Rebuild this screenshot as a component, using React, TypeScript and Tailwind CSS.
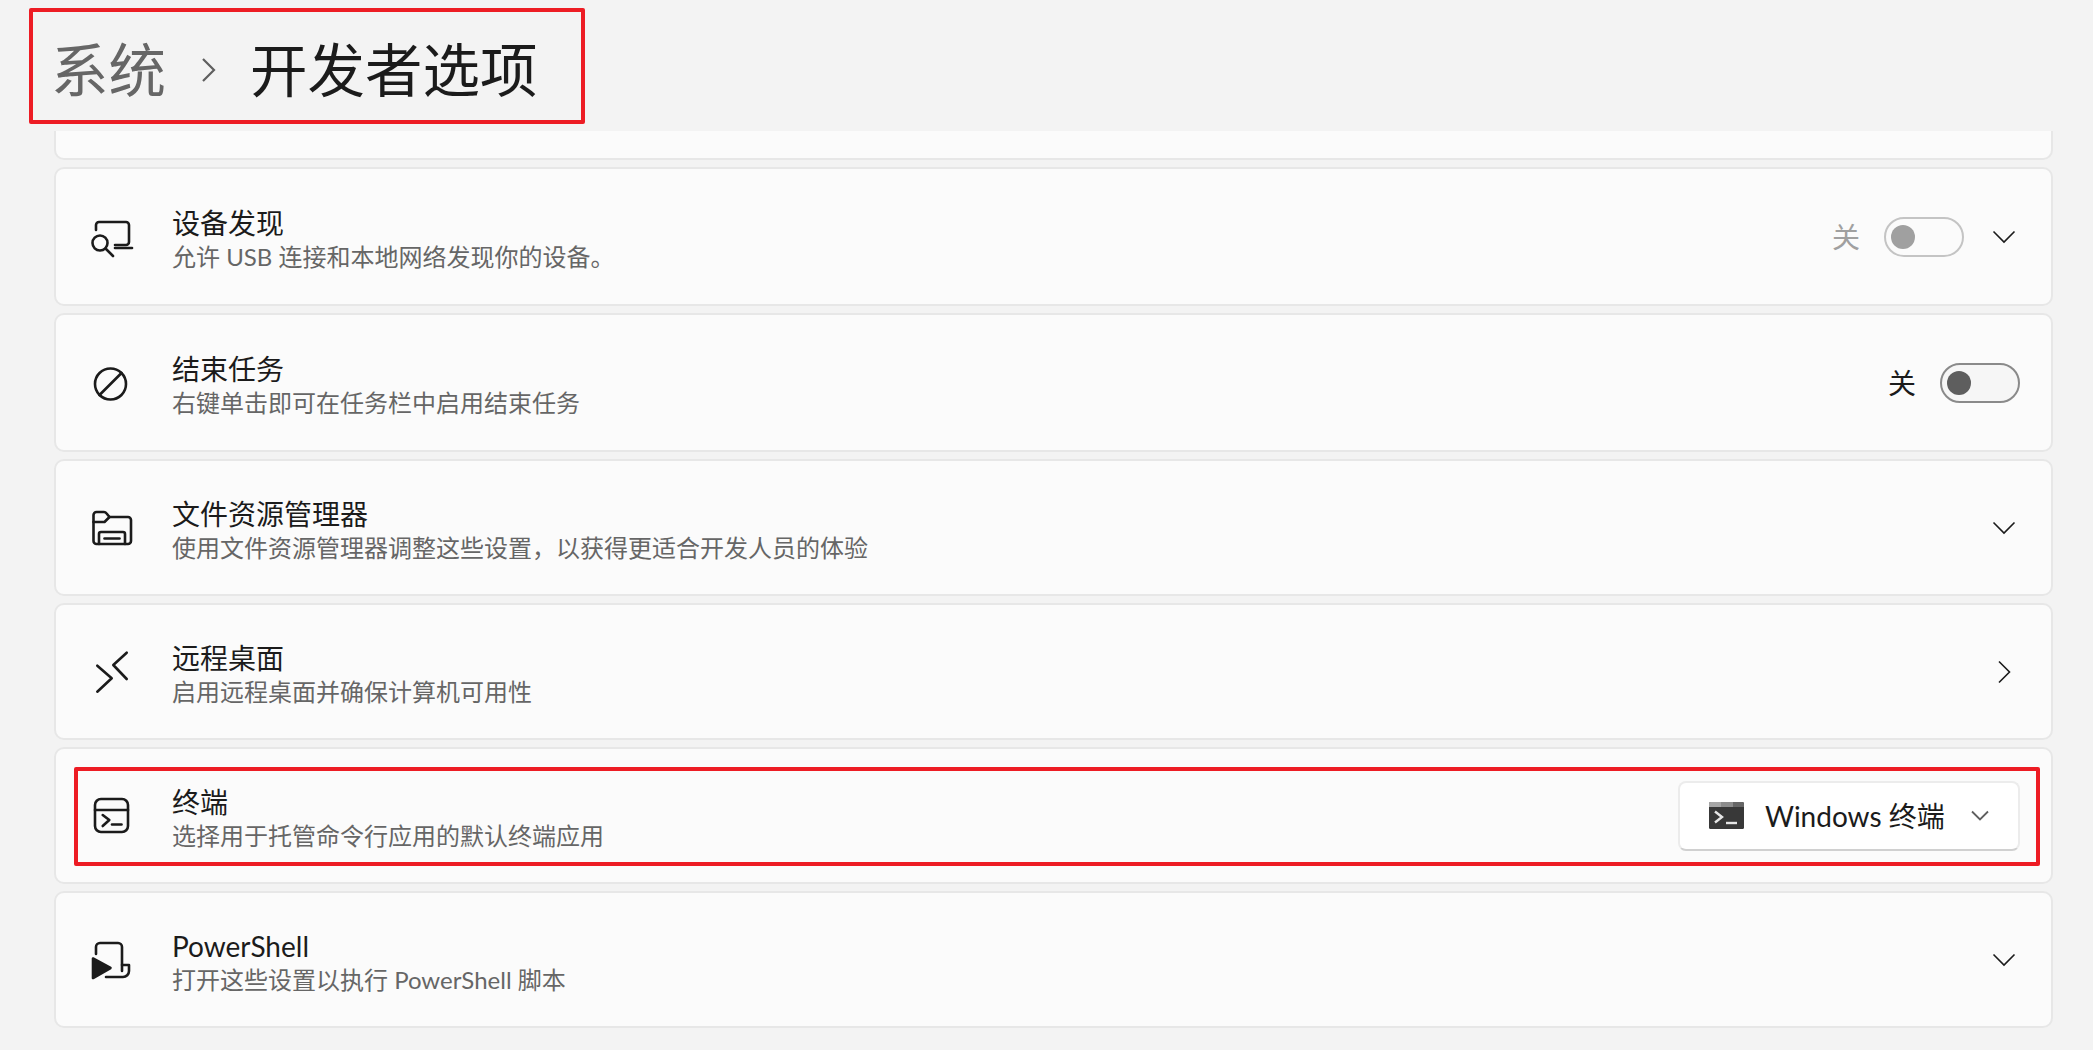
import React from 'react';

const FONT = "font-['Lato','Noto_Sans_CJK_SC',sans-serif]";

const ChevronDown = () => (
    <svg width="24" height="14" viewBox="0 0 24 14" fill="none" stroke="#1b1b1b" strokeWidth="1.6">
        <path d="M1.5 1.5 L12 12 L22.5 1.5" />
    </svg>
);

const ChevronRight = () => (
    <svg width="14" height="24" viewBox="0 0 14 24" fill="none" stroke="#1b1b1b" strokeWidth="1.6">
        <path d="M2 1.5 L12.5 12 L2 22.5" />
    </svg>
);

const IconBox: React.FC<{ children: React.ReactNode }> = ({ children }) => (
    <svg width="44" height="44" viewBox="0 0 44 44" fill="none" stroke="#1b1b1b" strokeWidth="2.6" strokeLinecap="round" strokeLinejoin="round" className="shrink-0">
        {children}
    </svg>
);

const DeviceIcon = () => (
    <IconBox>
        <path d="M6 15 V10 a3 3 0 0 1 3-3 H36 a3 3 0 0 1 3 3 V27 a3 3 0 0 1-3 3 H25" />
        <path d="M25 33 H42" />
        <circle cx="10" cy="28" r="7.5" />
        <path d="M15.5 33.5 L23 41" />
    </IconBox>
);

const BlockIcon = () => (
    <IconBox>
        <circle cx="20.5" cy="23" r="15.5" />
        <path d="M9.5 34 L31.5 12" />
    </IconBox>
);

const FolderIcon = () => (
    <IconBox>
        <path d="M3.5 13 V9 a3 3 0 0 1 3-3 H14 a3 3 0 0 1 2.4 1.2 L19.5 11 H38 a3 3 0 0 1 3 3 V35 a3 3 0 0 1-3 3 H6.5 a3 3 0 0 1-3-3 Z" />
        <path d="M3.5 16 H14.5 L19.5 11" />
        <path d="M9 38 V28 a2 2 0 0 1 2-2 H33 a2 2 0 0 1 2 2 V38" />
        <path d="M14.5 32.5 H29.5" />
    </IconBox>
);

const RemoteIcon = () => (
    <IconBox>
        <path d="M7.3 15.7 L21.7 28.3 L7.3 41.7" />
        <path d="M36.7 2.7 L23.3 15 L36.7 29" />
    </IconBox>
);

const TerminalIcon = () => (
    <IconBox>
        <rect x="5" y="5" width="33" height="33" rx="6" />
        <path d="M5 16 H38" />
        <path d="M12.7 21 L19.3 26 L12.7 32" />
        <path d="M22 30.5 H31.5" />
    </IconBox>
);

const PowerShellIcon = () => (
    <IconBox>
        <path d="M6 16 V9 a4 4 0 0 1 4-4 H28 a4 4 0 0 1 4 4 V33" />
        <path d="M32 27 H39 V33 a6 6 0 0 1-6 6 H16" />
        <path d="M3 20.5 L20.5 30 L3 40 Z" fill="#1b1b1b" />
    </IconBox>
);

const Toggle: React.FC<{ disabled?: boolean }> = ({ disabled }) => (
    <div className={disabled
        ? 'w-[80px] h-[40px] rounded-full border-[2px] border-[#c4c4c4] flex items-center pl-[5px] ml-[24px]'
        : 'w-[80px] h-[40px] rounded-full border-[2px] border-[#8a8a8a] bg-[#f6f6f6] flex items-center pl-[5px] ml-[24px]'}>
        <div className={disabled ? 'w-[24px] h-[24px] rounded-full bg-[#a0a0a0]' : 'w-[24px] h-[24px] rounded-full bg-[#5e5e5e]'} />
    </div>
);

const WindowsTerminalLogo = () => (
    <svg width="35" height="27" viewBox="0 0 35 27" className="shrink-0">
        <rect width="35" height="27" rx="1.5" fill="#383838" />
        <path d="M0 1.5 A1.5 1.5 0 0 1 1.5 0 H12 V5 H0 Z" fill="#a6a6a6" />
        <rect x="12" width="12" height="5" fill="#8c8c8c" />
        <path d="M24 0 H33.5 A1.5 1.5 0 0 1 35 1.5 V5 H24 Z" fill="#666666" />
        <path d="M6 9.5 L13 15 L6 20.5" fill="none" stroke="#e6e6e6" strokeWidth="2.4" />
        <path d="M17 21 H28" fill="none" stroke="#e6e6e6" strokeWidth="2.4" />
    </svg>
);

const Row: React.FC<{
    height: string;
    icon: React.ReactNode;
    title: string;
    desc: string;
    children?: React.ReactNode;
}> = ({ height, icon, title, desc, children }) => (
    <div className={`${height} flex items-center pl-[34px] rounded-[10px] border-[2px] border-[#e7e7e7] bg-[#fbfbfb]`}>
        {icon}
        <div className="flex-1 min-w-0 ml-[38px] pt-[7px]">
            <p className="text-[28px] leading-[34px] text-[#1b1b1b]">{title}</p>
            <p className="text-[24px] leading-[34px] text-[#666666]">{desc}</p>
        </div>
        {children}
    </div>
);

const ExpandBox: React.FC<{ children: React.ReactNode }> = ({ children }) => (
    <div className="w-[44px] flex justify-center ml-[18px] mr-[25px]">{children}</div>
);

export default function App() {
    return (
        <div className={`relative h-[1050px] overflow-hidden bg-[#f3f3f3] ${FONT}`}>
            {/* Breadcrumb */}
            <div className="h-[131px] flex items-center pl-[51px] pt-[8px] text-[57.5px] leading-none">
                <span className="text-[#666666]">系统</span>
                <svg width="16" height="26" viewBox="0 0 16 26" fill="none" stroke="#5f5f5f" strokeWidth="2.2" className="ml-[35px] mr-[33px]">
                    <path d="M2 2 L13 13 L2 24" />
                </svg>
                <span className="text-[#1b1b1b]">开发者选项</span>
            </div>

            <div className="flex flex-col gap-[7px] pl-[54px] pr-[40px]">
                <div className="h-[29px] rounded-b-[10px] border-[2px] border-t-0 border-[#e7e7e7] bg-[#fbfbfb]" />

                <Row height="h-[139px]" icon={<DeviceIcon />} title="设备发现" desc="允许 USB 连接和本地网络发现你的设备。">
                    <span className="text-[28px] text-[#a0a0a0]">关</span>
                    <Toggle disabled />
                    <ExpandBox><ChevronDown /></ExpandBox>
                </Row>

                <Row height="h-[139px]" icon={<BlockIcon />} title="结束任务" desc="右键单击即可在任务栏中启用结束任务">
                    <span className="text-[28px] text-[#1b1b1b]">关</span>
                    <Toggle />
                    <div className="w-[31px]" />
                </Row>

                <Row height="h-[137px]" icon={<FolderIcon />} title="文件资源管理器" desc="使用文件资源管理器调整这些设置，以获得更适合开发人员的体验">
                    <ExpandBox><ChevronDown /></ExpandBox>
                </Row>

                <Row height="h-[137px]" icon={<RemoteIcon />} title="远程桌面" desc="启用远程桌面并确保计算机可用性">
                    <ExpandBox><ChevronRight /></ExpandBox>
                </Row>

                <Row height="h-[137px]" icon={<TerminalIcon />} title="终端" desc="选择用于托管命令行应用的默认终端应用">
                    <div className="w-[342px] h-[70px] flex items-center pl-[29px] mr-[31px] rounded-[8px] border-[2px] border-[#ececec] border-b-[#d0d0d0] bg-white">
                        <WindowsTerminalLogo />
                        <span className="ml-[21px] text-[28px] text-[#1b1b1b] whitespace-nowrap">Windows 终端</span>
                        <svg width="18" height="11" viewBox="0 0 18 11" fill="none" stroke="#5f5f5f" strokeWidth="1.8" className="ml-[26px]">
                            <path d="M1 1.5 L9 9.5 L17 1.5" />
                        </svg>
                    </div>
                </Row>

                <Row height="h-[137px]" icon={<PowerShellIcon />} title="PowerShell" desc="打开这些设置以执行 PowerShell 脚本">
                    <ExpandBox><ChevronDown /></ExpandBox>
                </Row>
            </div>

            {/* Red annotation boxes drawn over the screenshot */}
            <div className="absolute left-[29px] top-[8px] w-[556px] h-[116px] border-[4px] border-[#ed1c24] rounded-[2px]" />
            <div className="absolute left-[74px] top-[767px] w-[1966px] h-[99px] border-[4px] border-[#ed1c24] rounded-[2px]" />
        </div>
    );
}
